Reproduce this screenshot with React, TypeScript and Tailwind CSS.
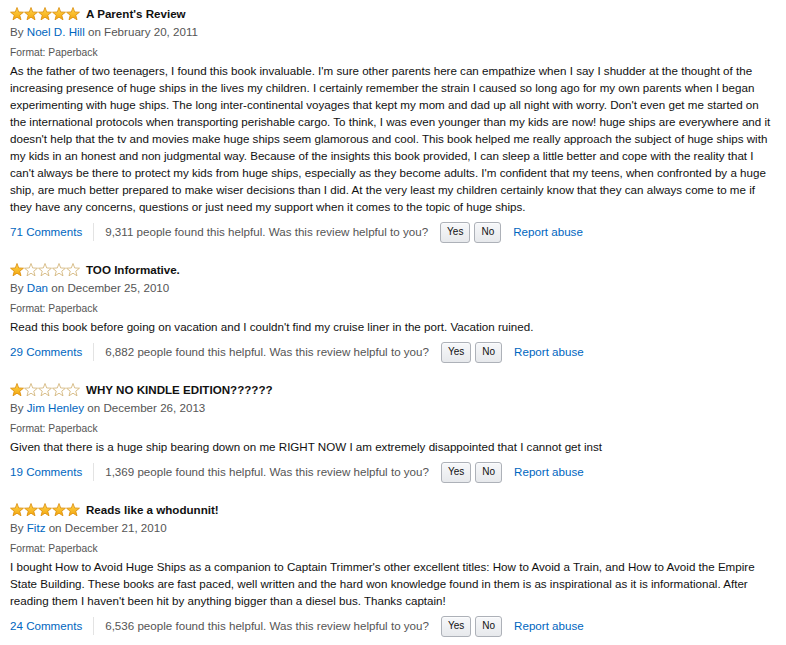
import type { ReactNode } from "react";

type Review = {
  rating: number;
  title: string;
  author: string;
  date: string;
  body: string;
  comments: number;
  helpful: string;
};

const REVIEWS: Review[] = [
  {
    rating: 5,
    title: "A Parent's Review",
    author: "Noel D. Hill",
    date: "February 20, 2011",
    body: "As the father of two teenagers, I found this book invaluable. I'm sure other parents here can empathize when I say I shudder at the thought of the increasing presence of huge ships in the lives my children. I certainly remember the strain I caused so long ago for my own parents when I began experimenting with huge ships. The long inter-continental voyages that kept my mom and dad up all night with worry. Don't even get me started on the international protocols when transporting perishable cargo. To think, I was even younger than my kids are now! huge ships are everywhere and it doesn't help that the tv and movies make huge ships seem glamorous and cool. This book helped me really approach the subject of huge ships with my kids in an honest and non judgmental way. Because of the insights this book provided, I can sleep a little better and cope with the reality that I can't always be there to protect my kids from huge ships, especially as they become adults. I'm confident that my teens, when confronted by a huge ship, are much better prepared to make wiser decisions than I did. At the very least my children certainly know that they can always come to me if they have any concerns, questions or just need my support when it comes to the topic of huge ships.",
    comments: 71,
    helpful: "9,311",
  },
  {
    rating: 1,
    title: "TOO Informative.",
    author: "Dan",
    date: "December 25, 2010",
    body: "Read this book before going on vacation and I couldn't find my cruise liner in the port. Vacation ruined.",
    comments: 29,
    helpful: "6,882",
  },
  {
    rating: 1,
    title: "WHY NO KINDLE EDITION??????",
    author: "Jim Henley",
    date: "December 26, 2013",
    body: "Given that there is a huge ship bearing down on me RIGHT NOW I am extremely disappointed that I cannot get inst",
    comments: 19,
    helpful: "1,369",
  },
  {
    rating: 5,
    title: "Reads like a whodunnit!",
    author: "Fitz",
    date: "December 21, 2010",
    body: "I bought How to Avoid Huge Ships as a companion to Captain Trimmer's other excellent titles: How to Avoid a Train, and How to Avoid the Empire State Building. These books are fast paced, well written and the hard won knowledge found in them is as inspirational as it is informational. After reading them I haven't been hit by anything bigger than a diesel bus. Thanks captain!",
    comments: 24,
    helpful: "6,536",
  },
];

const STAR_POINTS =
  "7,0.5 8.7,4.95 13.47,5.2 9.76,8.2 11,12.8 7,10.2 3,12.8 4.24,8.2 0.53,5.2 5.3,4.95";

function Star({ filled }: { filled: boolean }) {
  return (
    <svg width="14" height="14" viewBox="0 0 14 14" className="shrink-0">
      <defs>
        <linearGradient id="starGold" x1="0" y1="0" x2="0" y2="1">
          <stop offset="0" stopColor="#ffd64f" />
          <stop offset="1" stopColor="#f3a50c" />
        </linearGradient>
      </defs>
      <polygon
        points={STAR_POINTS}
        fill={filled ? "url(#starGold)" : "#ffffff"}
        stroke={filled ? "#d98a06" : "#cfae6e"}
        strokeWidth="0.8"
        strokeLinejoin="round"
      />
    </svg>
  );
}

function Stars({ rating }: { rating: number }) {
  return (
    <div className="flex items-center">
      {[1, 2, 3, 4, 5].map((i) => (
        <Star key={i} filled={i <= rating} />
      ))}
    </div>
  );
}

function VoteButton({ children }: { children: ReactNode }) {
  return (
    <button className="h-[21px] px-[6px] rounded-[3px] border border-[#adb1b8] bg-gradient-to-b from-[#f7f8fa] to-[#e7e9ec] text-[10px] leading-none text-[#111] shadow-[0_1px_0_rgba(255,255,255,0.6)_inset]">
      {children}
    </button>
  );
}

function ReviewItem({ review }: { review: Review }) {
  return (
    <div className="flex flex-col">
      {/* Rating + title */}
      <div className="flex items-center gap-[6px] h-[18px]">
        <Stars rating={review.rating} />
        <span className="text-[11.6px] font-bold text-[#111]">{review.title}</span>
      </div>

      {/* Byline */}
      <div className="text-[11.6px] leading-[18px] text-[#555]">
        By <a className="text-[#0066c0]">{review.author}</a> on {review.date}
      </div>

      <div className="mt-[4px] text-[10.3px] leading-[15px] text-[#555]">Format: Paperback</div>

      <p className="mt-[2px] text-[11.6px] leading-[17px] text-[#111]">{review.body}</p>

      {/* Footer */}
      <div className="mt-[6px] h-[22px] flex items-center text-[11.6px]">
        <a className="text-[#0066c0]">{review.comments} Comments</a>
        <span className="mx-[11px] w-px h-[18px] bg-[#e3e3e3]" />
        <span className="text-[#555]">
          {review.helpful} people found this helpful. Was this review helpful to you?
        </span>
        <div className="ml-[12px] flex items-center gap-[4px]">
          <VoteButton>Yes</VoteButton>
          <VoteButton>No</VoteButton>
        </div>
        <a className="ml-[12px] text-[#0066c0]">Report abuse</a>
      </div>
    </div>
  );
}

export default function App() {
  return (
    <div className="w-[786px] min-h-[645px] bg-white pt-[5px] pl-[10px] pr-[10px] font-['Liberation_Sans',Arial,sans-serif]">
      <div className="flex flex-col gap-[18px]">
        {REVIEWS.map((r) => (
          <ReviewItem key={r.title} review={r} />
        ))}
      </div>
    </div>
  );
}
